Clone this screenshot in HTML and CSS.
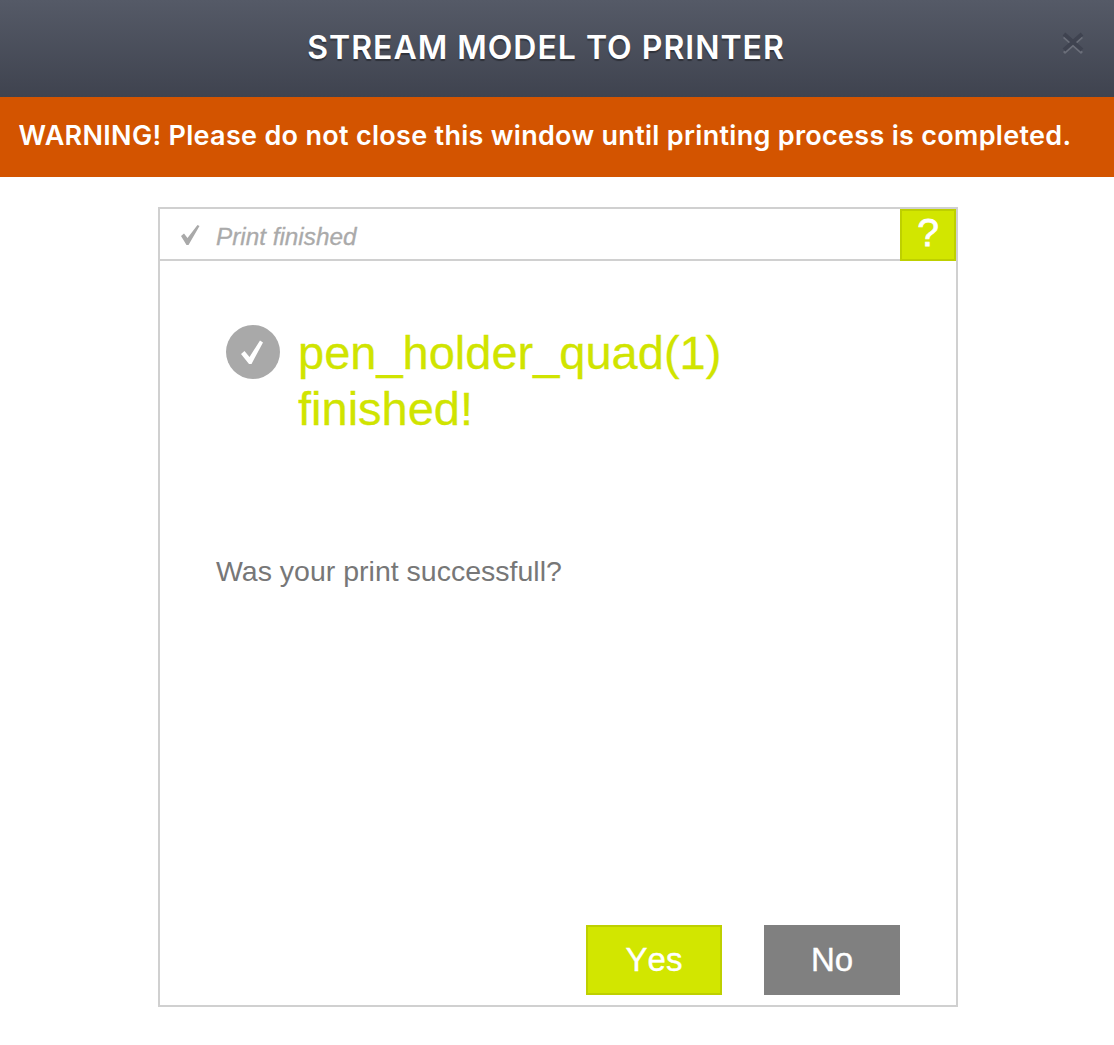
FILE: index.html
```html
<!DOCTYPE html>
<html lang="en">
<head>
    <meta charset="UTF-8">
    <meta name="viewport" content="width=device-width, initial-scale=1.0">
    <title>Stream Model to Printer</title>
    <link rel="stylesheet" href="styles.css">
</head>
<body>
    <div class="modal">
        <div class="modal-header">
            <h1 class="modal-title">STREAM MODEL TO PRINTER</h1>
            <button class="close-button" aria-label="Close">
                <svg width="24" height="24" viewBox="0 0 24 24">
                    <path class="close-shadow" d="M3 6 L21 22 M21 6 L3 22"/>
                    <path class="close-cross" d="M3 3 L21 19 M21 3 L3 19"/>
                </svg>
            </button>
        </div>
        <div class="warning">WARNING! Please do not close this window until printing process is completed.</div>

        <div class="content">
            <div class="panel">
                <div class="panel-header">
                    <svg class="step-check" width="22" height="22" viewBox="0 0 22 22">
                        <path d="M2 12 L5 9.500 L8.500 14 L18.500 1 L20.500 2 L9.500 21 L7.500 21 Z"/>
                    </svg>
                    <span class="step-label">Print finished</span>
                    <button class="help-button">?</button>
                </div>
                <div class="panel-body">
                    <div class="status">
                        <svg class="status-icon" width="54" height="54" viewBox="0 0 54 54">
                            <circle cx="27" cy="27" r="27"/>
                            <path d="M15 29 L18.500 26 L23.500 32 L34 15.500 L37 17.500 L25.500 39 L23 39 Z"/>
                        </svg>
                        <h2 class="status-title">pen_holder_quad(1) finished!</h2>
                    </div>
                    <p class="question">Was your print successfull?</p>
                    <div class="actions">
                        <button class="action-button yes">Yes</button>
                        <button class="action-button no">No</button>
                    </div>
                </div>
            </div>
        </div>
    </div>
</body>
</html>
```

FILE: styles.css
```css
body {
    font-family: 'Liberation Sans', Arial, sans-serif;
    margin: 0;
    padding: 0;
    background-color: #ffffff;
}

.modal {
    height: 1045px;
    overflow: hidden;
}

.modal-header {
    height: 97px;
    box-sizing: border-box;
    padding: 0 22px 2px 0;
    display: flex;
    align-items: center;
    justify-content: center;
    position: relative;
    background: linear-gradient(#555a67, #3f434f);
}

.modal-title {
    margin: 0;
    font-family: 'Inter', sans-serif;
    font-size: 32px;
    font-weight: 600;
    letter-spacing: 1px;
    white-space: nowrap;
    color: #ffffff;
    text-shadow: 0 2px 1px rgba(0, 0, 0, 0.35);
}

.close-button {
    position: absolute;
    top: 31px;
    right: 29px;
    width: 24px;
    height: 24px;
    padding: 0;
    background: none;
    border: none;
}

.close-cross {
    stroke: #3f4350;
    stroke-width: 4;
    fill: none;
}

.close-shadow {
    stroke: #6b6f7a;
    stroke-width: 3;
    fill: none;
}

.warning {
    height: 80px;
    padding-right: 24px;
    line-height: 78px;
    background-color: #d35400;
    color: #ffffff;
    font-family: 'Inter', sans-serif;
    font-size: 27px;
    font-weight: 600;
    letter-spacing: 0.3px;
    text-align: center;
    white-space: nowrap;
}

.content {
    display: flex;
    justify-content: center;
    padding: 30px 0 0 2px;
}

.panel {
    width: 800px;
    height: 800px;
    box-sizing: border-box;
    border: 2px solid #d0d0d0;
    display: flex;
    flex-direction: column;
}

.panel-header {
    height: 52px;
    flex-shrink: 0;
    box-sizing: border-box;
    border-bottom: 2px solid #d0d0d0;
    display: flex;
    align-items: center;
    padding: 2px 0 0 19px;
}

.step-check {
    fill: #a9a9a9;
}

.step-label {
    margin-left: 15px;
    padding-top: 4px;
    font-size: 24.300px;
    font-style: italic;
    color: #aaaaaa;
    -webkit-text-stroke: 0.3px #aaaaaa;
}

.help-button {
    align-self: flex-start;
    margin: -2px 0 0 auto;
    width: 56px;
    height: 52px;
    padding: 0 0 6px;
    background-color: #d2e600;
    border: 2px solid #bed000;
    color: #ffffff;
    font-family: inherit;
    font-size: 39px;
    line-height: 1;
    -webkit-text-stroke: 0.8px #ffffff;
}

.panel-body {
    flex: 1;
    display: flex;
    flex-direction: column;
    padding: 64px 56px 10px;
}

.status {
    display: flex;
    align-items: flex-start;
    padding-left: 10px;
}

.status-icon {
    flex-shrink: 0;
    margin-right: 18px;
}

.status-icon circle {
    fill: #a9a9a9;
}

.status-icon path {
    fill: #ffffff;
}

.status-title {
    width: 450px;
    margin: 0;
    font-size: 47px;
    font-weight: normal;
    line-height: 56px;
    color: #d0e400;
    -webkit-text-stroke: 0.3px #d0e400;
}

.question {
    margin: 118px 0 0;
    font-size: 28.500px;
    color: #777777;
}

.actions {
    margin-top: auto;
    display: flex;
    justify-content: flex-end;
    gap: 42px;
}

.action-button {
    width: 136px;
    height: 70px;
    padding: 0;
    border: 2px solid transparent;
    color: #ffffff;
    font-family: inherit;
    font-size: 33px;
    font-kerning: none;
    -webkit-text-stroke: 0.4px #ffffff;
}

.action-button.yes {
    background-color: #d2e600;
    border-color: #bed000;
}

.action-button.no {
    background-color: #808080;
    border-color: #808080;
}
```
